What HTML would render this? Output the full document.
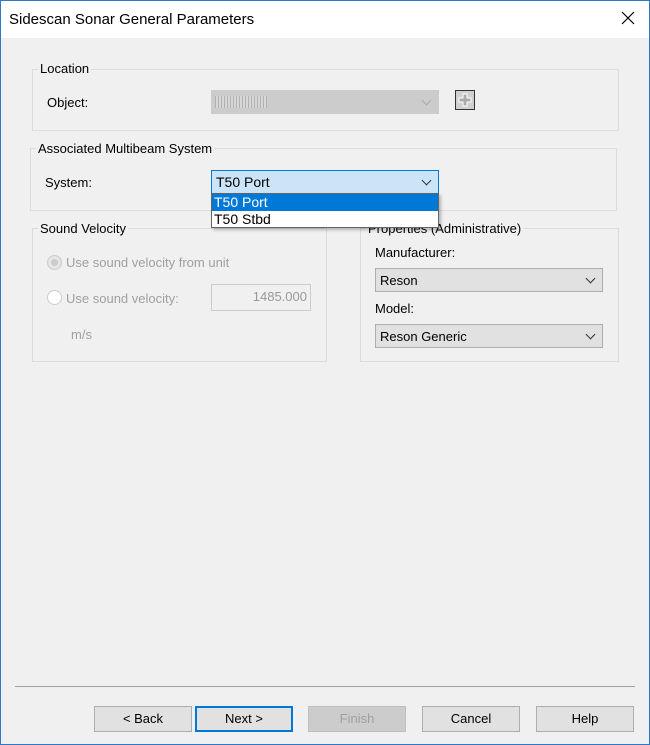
<!DOCTYPE html>
<html><head><style>
*{box-sizing:border-box;margin:0;padding:0}
body{width:650px;height:745px;position:relative;background:#f0f0f0;font-family:"Liberation Sans",sans-serif;font-size:13px;color:#000;overflow:hidden}
.a{position:absolute}
.win{left:0;top:0;width:650px;height:745px;border:1px solid #2b79c8}
.title{left:1px;top:1px;width:648px;height:37px;background:#fff}
.grp{border:1px solid #dcdcdc}
.leg{background:#f0f0f0;padding:0 2px;white-space:nowrap}
.combo{border:1px solid #adadad;background:#e1e1e1;padding:4px 4px;height:24px}
.chev{position:absolute;right:8px;top:6px;width:7px;height:7px;border-right:1px solid #333;border-bottom:1px solid #333;transform:rotate(45deg)}
.btn{top:706px;width:98px;height:26px;border:1px solid #adadad;background:#e1e1e1;text-align:center;line-height:24px}
.gray{color:#a0a0a0}
.radio{width:15px;height:15px;border-radius:50%;border:1px solid #ccc;background:#fff}
</style></head><body>
<div class="a win"></div>
<div class="a title"></div>
<div class="a" style="left:9px;top:11px;font-size:15px">Sidescan Sonar General Parameters</div>
<svg class="a" style="left:621px;top:11px" width="14" height="14"><path d="M1 1L13 13M13 1L1 13" stroke="#000" stroke-width="1.2"/></svg>

<div class="a grp" style="left:32px;top:69px;width:587px;height:62px"></div>
<div class="a leg" style="left:38px;top:61px">Location</div>
<div class="a" style="left:47px;top:95px">Object:</div>
<div class="a combo" style="left:211px;top:90px;width:228px;background:#cccccc;border-color:#ccc"><div style="position:absolute;left:3px;top:5px;width:52px;height:12px;background:repeating-linear-gradient(90deg,#b0b0b0 0 1px,#d8d8d8 1px 3px)"></div><div class="chev" style="border-color:#aaa"></div></div>
<div class="a" style="left:455px;top:90px;width:20px;height:20px;border:1px solid #333;background:#d0d0d0"><svg width="18" height="18"><path d="M7 3h4v4h4v4h-4v4h-4v-4h-4v-4h4z" fill="#aaa" stroke="#fff"/></svg></div>

<div class="a grp" style="left:30px;top:148px;width:587px;height:63px"></div>
<div class="a leg" style="left:36px;top:141px">Associated Multibeam System</div>
<div class="a" style="left:45px;top:175px">System:</div>

<div class="a grp" style="left:32px;top:228px;width:295px;height:134px"></div>
<div class="a leg" style="left:38px;top:221px">Sound Velocity</div>
<div class="a radio" style="left:47px;top:255px;background:#ccc;box-shadow:inset 0 0 0 3px #e6e6e6"></div>
<div class="a gray" style="left:66px;top:255px">Use sound velocity from unit</div>
<div class="a radio" style="left:47px;top:290px"></div>
<div class="a gray" style="left:66px;top:291px">Use sound velocity:</div>
<div class="a" style="left:211px;top:284px;width:100px;height:27px;border:1px solid #ccc;background:#f0f0f0;text-align:right;padding:4px 3px" ><span class="gray" style="color:#999">1485.000</span></div>
<div class="a gray" style="left:71px;top:327px">m/s</div>

<div class="a grp" style="left:360px;top:228px;width:259px;height:134px"></div>
<div class="a leg" style="left:366px;top:221px">Properties (Administrative)</div>
<div class="a" style="left:375px;top:245px">Manufacturer:</div>
<div class="a combo" style="left:375px;top:268px;width:228px">Reson<div class="chev"></div></div>
<div class="a" style="left:375px;top:301px">Model:</div>
<div class="a combo" style="left:375px;top:324px;width:228px">Reson Generic<div class="chev"></div></div>

<div class="a combo" style="left:211px;top:170px;width:228px;background:#cce4f7;border-color:#0078d7;font-size:14px;padding-top:3px">T50 Port<div class="chev"></div></div>
<div class="a" style="left:211px;top:193px;width:228px;height:35px;border:1px solid #646464;background:#fff;box-shadow:2px 2px 3px rgba(0,0,0,.25);font-size:14px">
<div style="background:#0078d7;color:#fff;height:17px;line-height:17px;padding-left:2px">T50 Port</div>
<div style="height:16px;line-height:16px;padding-left:2px">T50 Stbd</div></div>

<div class="a" style="left:15px;top:686px;width:620px;height:1px;background:#a0a0a0"></div>
<div class="a btn" style="left:94px">&lt; Back</div>
<div class="a btn" style="left:195px;border:2px solid #0078d7;line-height:22px">Next &gt;</div>
<div class="a btn gray" style="left:308px;background:#cccccc;border-color:#bfbfbf">Finish</div>
<div class="a btn" style="left:422px">Cancel</div>
<div class="a btn" style="left:536px">Help</div>
</body></html>
